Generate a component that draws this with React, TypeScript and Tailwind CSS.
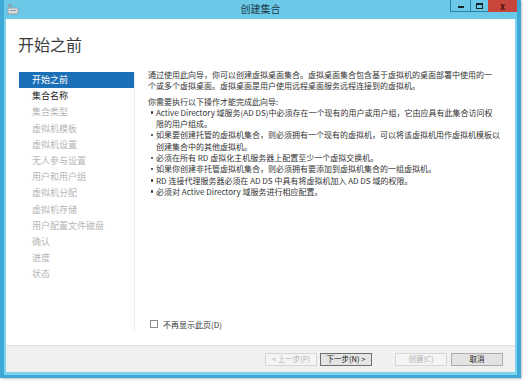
import React from "react";

const navItems = [
  { label: "开始之前", state: "active" },
  { label: "集合名称", state: "normal" },
  { label: "集合类型", state: "off" },
  { label: "虚拟机模板", state: "off" },
  { label: "虚拟机设置", state: "off" },
  { label: "无人参与设置", state: "off" },
  { label: "用户和用户组", state: "off" },
  { label: "虚拟机分配", state: "off" },
  { label: "虚拟机存储", state: "off" },
  { label: "用户配置文件磁盘", state: "off" },
  { label: "确认", state: "off" },
  { label: "进度", state: "off" },
  { label: "状态", state: "off" },
];

// each bullet is split into the lines the dialog wraps it on
const bullets = [
  [
    "Active Directory 域服务(AD DS)中必须存在一个现有的用户或用户组，它由应具有此集合访问权",
    "限的用户组成。",
  ],
  [
    "如果要创建托管的虚拟机集合，则必须拥有一个现有的虚拟机，可以将该虚拟机用作虚拟机模板以",
    "创建集合中的其他虚拟机。",
  ],
  ["必须在所有 RD 虚拟化主机服务器上配置至少一个虚拟交换机。"],
  ["如果你创建非托管虚拟机集合，则必须拥有要添加到虚拟机集合的一组虚拟机。"],
  ["RD 连接代理服务器必须在 AD DS 中具有将虚拟机加入 AD DS 域的权限。"],
  ["必须对 Active Directory 域服务进行相应配置。"],
];

function Button({ label, disabled, focused }: { label: string; disabled?: boolean; focused?: boolean }) {
  return (
    <div
      className={
        "w-[52px] h-[13px] flex items-center justify-center text-[7.5px] leading-none border " +
        (disabled
          ? "border-[#d6d6d6] bg-[#f4f4f4] text-[#b3b3b3]"
          : focused
          ? "border-[#6f6f6f] bg-[#e4e4e4] text-[#222]"
          : "border-[#acacac] bg-[#e2e2e2] text-[#222]")
      }
    >
      {label}
    </div>
  );
}

export default function App() {
  return (
    <div className="w-[524px] h-[381px] bg-white overflow-hidden font-['Noto_Sans_CJK_SC','Noto_Sans',sans-serif]">
      <div className="w-[521px] h-[378px] flex flex-col bg-[#7fd3ee] border-l-4 border-r-4 border-b-[3px] border-[#3ea9d6] shadow-[1px_1px_2px_rgba(0,0,0,0.25)]">
        {/* title bar */}
        <div className="h-[19px] flex items-start bg-[#6bc8e6] relative">
          <div className="w-[12px] h-[12px] mt-[3px] ml-[3px]">
            <svg viewBox="0 0 12 12" width="12" height="12">
              <rect x="1" y="1" width="4" height="3" fill="#8aa6b4" />
              <rect x="1" y="5" width="10" height="6" rx="1" fill="#d8dde0" stroke="#8a969c" strokeWidth="0.8" />
              <rect x="3" y="7" width="6" height="1" fill="#8a969c" />
            </svg>
          </div>
          <div className="absolute left-0 right-0 top-[2px] text-center text-[10px] leading-[14px] text-[#1d3a4a]">
            创建集合
          </div>
          <div className="ml-auto flex h-[12px] relative z-10">
            <div className="w-[20px] h-full border-l border-b border-[#2f7fa6] flex items-end justify-center pb-[3px]">
              <div className="w-[6px] h-[2px] bg-[#15232b]" />
            </div>
            <div className="w-[18px] h-full border-l border-b border-[#2f7fa6] flex items-center justify-center">
              <div className="w-[7px] h-[6px] border border-t-2 border-[#15232b]" />
            </div>
            <div className="w-[29px] h-full bg-[#c9463d] flex items-center justify-center text-[9px] font-bold leading-none text-[#4a1210]">
              x
            </div>
          </div>
        </div>

        {/* client area */}
        <div className="flex-1 mx-[2px] mb-[3px] bg-white flex flex-col">
          <div className="h-[47px] pl-[12px] pt-[15px] text-[16px] leading-[20px] text-[#3c3c3c]">开始之前</div>

          <div className="flex-1 flex">
            <div className="w-[129px] shrink-0 pl-[13px] pt-[6px] pb-[14px] flex">
              <div className="flex-1 border-r border-[#ececec] flex flex-col">
                {navItems.map((item) => (
                  <div
                    key={item.label}
                    className={
                      "h-[16.2px] pl-[13px] text-[9px] leading-[16.2px] whitespace-nowrap " +
                      (item.state === "active"
                        ? "bg-[#1b6fb6] text-white"
                        : item.state === "normal"
                        ? "text-[#1e1e1e]"
                        : "text-[#b5b5b5]")
                    }
                  >
                    {item.label}
                  </div>
                ))}
              </div>
            </div>

            <div className="flex-1 min-w-0 flex flex-col pl-[13px] pt-[3px] text-[8px] leading-[11.3px] text-[#333]">
              <div className="mb-[4px]">
                <div className="whitespace-nowrap">
                  通过使用此向导，你可以创建虚拟桌面集合。虚拟桌面集合包含基于虚拟机的桌面部署中使用的一
                </div>
                <div className="whitespace-nowrap">个或多个虚拟桌面。虚拟桌面是用户使用远程桌面服务远程连接到的虚拟机。</div>
              </div>
              <div>你需要执行以下操作才能完成此向导:</div>
              <div className="flex flex-col">
                {bullets.map((lines, i) => (
                  <div key={i} className="flex">
                    <div className="w-[8px] shrink-0 flex justify-center pt-[4.5px]">
                      <div className="w-[2.5px] h-[2.5px] rounded-full bg-[#333]" />
                    </div>
                    <div>
                      {lines.map((l) => (
                        <div key={l} className="whitespace-nowrap">
                          {l}
                        </div>
                      ))}
                    </div>
                  </div>
                ))}
              </div>

              <div className="mt-auto mb-[15px] flex items-center gap-[5px] pl-[2px]">
                <div className="w-[8px] h-[8px] border border-[#8c8c8c] bg-white" />
                <span>不再显示此页(D)</span>
              </div>
            </div>
          </div>

          {/* button bar */}
          <div className="h-[27px] bg-[#f0f0f0] border-t border-[#e2e2e2] flex items-center justify-end pr-[12px]">
            <Button label="< 上一步(P)" disabled />
            <div className="w-[3px]" />
            <Button label="下一步(N) >" focused />
            <div className="w-[23px]" />
            <Button label="创建(C)" disabled />
            <div className="w-[4px]" />
            <Button label="取消" />
          </div>
        </div>
      </div>
    </div>
  );
}
